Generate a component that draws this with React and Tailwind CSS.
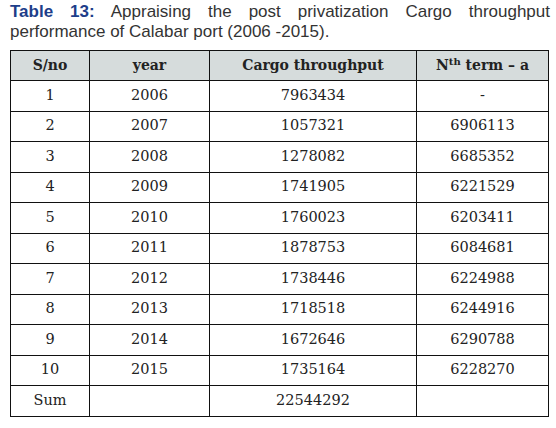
import React from 'react';

const rows = [
  ['1', '2006', '7963434', '-'],
  ['2', '2007', '1057321', '6906113'],
  ['3', '2008', '1278082', '6685352'],
  ['4', '2009', '1741905', '6221529'],
  ['5', '2010', '1760023', '6203411'],
  ['6', '2011', '1878753', '6084681'],
  ['7', '2012', '1738446', '6224988'],
  ['8', '2013', '1718518', '6244916'],
  ['9', '2014', '1672646', '6290788'],
  ['10', '2015', '1735164', '6228270'],
  ['Sum', '', '22544292', ''],
];

const App = () => {
  return (
    <div className="w-[556px] h-[428px] bg-white overflow-hidden">
      {/* Caption */}
      <p className="ml-[10px] mr-[6px] pt-[2px] text-[17px] leading-[20px] text-[#333] text-justify font-['Liberation_Sans',Arial,sans-serif]">
        <span className="font-bold text-[#1d3e8a]">Table 13:</span> Appraising the post privatization Cargo throughput performance of Calabar port (2006 -2015).
      </p>

      {/* Table */}
      <table className="ml-[10px] mt-[8px] w-[538px] border-collapse font-['DejaVu_Serif',serif] text-[14.5px] text-[#222] table-fixed">
        <colgroup>
          <col className="w-[79px]" />
          <col className="w-[120px]" />
          <col className="w-[207px]" />
          <col className="w-[132px]" />
        </colgroup>
        <thead>
          <tr className="bg-[#d6dcdc] h-[30px]">
            <th className="border border-[#111] font-bold text-center text-[14px]">S/no</th>
            <th className="border border-[#111] font-bold text-center text-[14px]">year</th>
            <th className="border border-[#111] font-bold text-center text-[14px]">Cargo throughput</th>
            <th className="border border-[#111] font-bold text-center text-[14px]">
              N<sup className="text-[10px]">th</sup> term – a
            </th>
          </tr>
        </thead>
        <tbody>
          {rows.map((r, i) => (
            <tr key={i} className="h-[30.5px]">
              {r.map((c, j) => (
                <td key={j} className="border border-[#111] text-center">{c}</td>
              ))}
            </tr>
          ))}
        </tbody>
      </table>
    </div>
  );
};

export default App;
